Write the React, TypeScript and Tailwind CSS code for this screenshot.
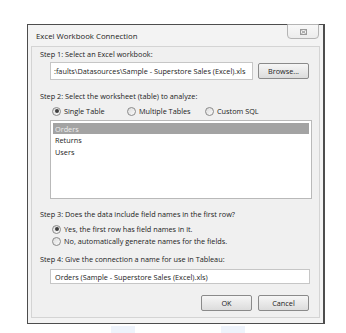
function Radio({ checked }: { checked?: boolean }) {
  return (
    <span className="w-[9px] h-[9px] rounded-full border border-[#8a8a8a] bg-gradient-to-br from-[#dcdcdc] to-[#fafafa] flex items-center justify-center shrink-0">
      {checked && <span className="w-[4px] h-[4px] rounded-full bg-[#3f3f3f]" />}
    </span>
  );
}

function Btn({ label }: { label: string }) {
  return (
    <div className="w-[51px] h-[16px] rounded-[2px] border border-[#8a8a8a] bg-gradient-to-b from-[#f6f6f6] to-[#dcdcdc] flex items-center justify-center">
      {label}
    </div>
  );
}

export default function App() {
  return (
    <div className="w-[346px] h-[333px] bg-white pt-[24px] pl-[27px] overflow-hidden font-['Open_Sans',sans-serif] text-[7.3px] leading-[10px] text-[#222]">
      {/* Dialog */}

      <div className="relative w-[298px] h-[300px] border border-[#4d4d4d] border-r-2 bg-[#f3f3f3] pl-[3px] pr-[3px] pb-[5px] flex flex-col">
        <div className="h-[21px] flex items-center pl-[5px] text-[7.8px]">
          Excel Workbook Connection
        </div>

        <div className="absolute top-[-1px] right-[4px] w-[32px] h-[15px] rounded-b-[4px] border border-[#b4b4b4] bg-gradient-to-b from-[#f8f8f8] to-[#ececec] flex items-center justify-center">
          <svg width="7" height="6" viewBox="0 0 7 6">
            <rect x="0.5" y="0.5" width="6" height="5" fill="none" stroke="#9a9a9a" strokeWidth="1" />
            <path d="M1.5 1.5 L5.5 4.5 M5.5 1.5 L1.5 4.5" stroke="#9a9a9a" strokeWidth="1" />
          </svg>
        </div>

        {/* Content */}

        <div className="flex-1 border border-[#d4d4d4] bg-[#f0f0f0] pl-[8px] pr-[10px] pt-[2px] flex flex-col">
          <div>Step 1: Select an Excel workbook:</div>

          <div className="mt-[3px] pl-[10px] flex items-center gap-[5px]">
            <div className="w-[203px] h-[18px] border border-[#c6c6c6] bg-white flex items-center pl-[3px] whitespace-nowrap overflow-hidden">
              :faults\Datasources\Sample - Superstore Sales (Excel).xls
            </div>
            <Btn label="Browse..." />
          </div>

          <div className="mt-[11px]">Step 2: Select the worksheet (table) to analyze:</div>

          <div className="mt-[5px] pl-[12px] flex items-center">
            <div className="w-[75px] flex items-center gap-[3px]">
              <Radio checked />
              Single Table
            </div>
            <div className="w-[78px] flex items-center gap-[3px]">
              <Radio />
              Multiple Tables
            </div>
            <div className="flex items-center gap-[3px]">
              <Radio />
              Custom SQL
            </div>
          </div>

          <div className="mt-[4px] ml-[10px] w-[262px] h-[79px] border border-[#b9b9b9] bg-white p-[2px] flex flex-col">
            <div className="h-[11px] bg-[#a3a3a3] text-[#eeeeee] pl-[2px] flex items-center">Orders</div>
            <div className="h-[12px] pl-[2px] flex items-center">Returns</div>
            <div className="h-[12px] pl-[2px] flex items-center">Users</div>
          </div>

          <div className="mt-[10px]">Step 3: Does the data include field names in the first row?</div>

          <div className="mt-[5px] pl-[12px] flex items-center gap-[3px]">
            <Radio checked />
            Yes, the first row has field names in it.
          </div>
          <div className="mt-[2px] pl-[12px] flex items-center gap-[3px]">
            <Radio />
            No, automatically generate names for the fields.
          </div>

          <div className="mt-[8px]">Step 4: Give the connection a name for use in Tableau:</div>

          <div className="mt-[5px] ml-[10px] w-[260px] h-[15px] border border-[#c6c6c6] bg-white flex items-center pl-[4px]">
            Orders (Sample - Superstore Sales (Excel).xls)
          </div>

          <div className="mt-[11px] flex justify-end gap-[6px]">
            <Btn label="OK" />
            <Btn label="Cancel" />
          </div>
        </div>
      </div>

      {/* faint page marks below the dialog */}

      <div className="mt-[2px] flex gap-[86px] pl-[84px]">
        <div className="w-[24px] h-[8px] bg-[#eef3fb]" />
        <div className="w-[24px] h-[8px] bg-[#eef3fb]" />
      </div>
    </div>
  );
}
